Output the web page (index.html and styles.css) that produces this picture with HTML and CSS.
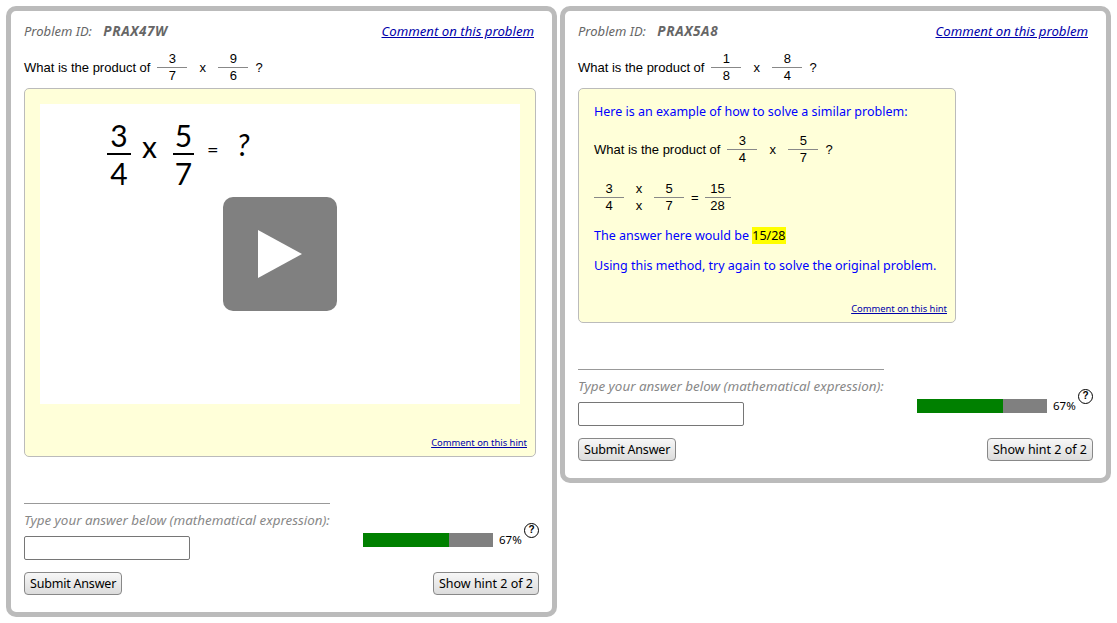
FILE: index.html
```html
<!DOCTYPE html>
<html>
    <head>
        <meta charset="utf-8">
        <title>Problem set</title>
        <link rel="stylesheet" href="styles.css">
    </head>
    <body>
        <div class="panel">
            <div class="panel-head">
                <div class="problem-id">Problem ID: <b>PRAX47W</b></div>
                <a class="comment" href="#">Comment on this problem</a>
            </div>
            <div class="question">
                What is the product of
                <span class="frac"><span>3</span><span>7</span></span>
                <span class="op">x</span>
                <span class="frac"><span>9</span><span>6</span></span>
                <span class="end">?</span>
            </div>
            <div class="hint hint-video">
                <div class="video">
                    <div class="chalk">
                        <span class="chalk-frac chalk-a"><span>3</span><span>4</span></span>
                        <span class="chalk-x">x</span>
                        <span class="chalk-frac chalk-b"><span>5</span><span>7</span></span>
                        <span class="chalk-eq">=</span>
                        <span class="chalk-q">?</span>
                    </div>
                    <div class="play">
                        <svg width="44" height="48" viewBox="0 0 44 48"><path d="M0 0L44 24L0 48Z" fill="#fff"/></svg>
                    </div>
                </div>
                <a class="comment-hint" href="#">Comment on this hint</a>
            </div>
            <div class="answer">
                <div class="answer-left">
                    <div class="label">Type your answer below (mathematical expression):</div>
                    <input class="answer-box" type="text">
                </div>
                <div class="progress">
                    <div class="bar"><div class="bar-fill" style="width:66%"></div></div>
                    <span class="pct">67%</span>
                    <span class="help">?</span>
                </div>
            </div>
            <div class="buttons">
                <button class="btn btn-submit">Submit Answer</button>
                <button class="btn">Show hint 2 of 2</button>
            </div>
        </div>

        <div class="panel">
            <div class="panel-head">
                <div class="problem-id">Problem ID: <b>PRAX5A8</b></div>
                <a class="comment" href="#">Comment on this problem</a>
            </div>
            <div class="question">
                What is the product of
                <span class="frac"><span>1</span><span>8</span></span>
                <span class="op">x</span>
                <span class="frac"><span>8</span><span>4</span></span>
                <span class="end">?</span>
            </div>
            <div class="hint hint-text">
                <p class="hint-line">Here is an example of how to solve a similar problem:</p>
                <div class="question hint-question">
                    What is the product of
                    <span class="frac"><span>3</span><span>4</span></span>
                    <span class="op">x</span>
                    <span class="frac"><span>5</span><span>7</span></span>
                    <span class="end">?</span>
                </div>
                <div class="question worked">
                    <span class="frac first"><span>3</span><span>4</span></span>
                    <span class="frac ops"><span>x</span><span>x</span></span>
                    <span class="frac"><span>5</span><span>7</span></span>
                    <span class="eq">=</span>
                    <span class="frac small"><span>15</span><span>28</span></span>
                </div>
                <p class="hint-line">The answer here would be <mark>15/28</mark></p>
                <p class="hint-line">Using this method, try again to solve the original problem.</p>
                <a class="comment-hint" href="#">Comment on this hint</a>
            </div>
            <div class="answer">
                <div class="answer-left">
                    <div class="label">Type your answer below (mathematical expression):</div>
                    <input class="answer-box" type="text">
                </div>
                <div class="progress">
                    <div class="bar"><div class="bar-fill" style="width:66%"></div></div>
                    <span class="pct">67%</span>
                    <span class="help">?</span>
                </div>
            </div>
            <div class="buttons">
                <button class="btn btn-submit">Submit Answer</button>
                <button class="btn">Show hint 2 of 2</button>
            </div>
        </div>
    </body>
</html>
```
FILE: styles.css
```css
body {
    margin: 0;
    padding: 6px;
    display: flex;
    align-items: flex-start;
    gap: 3px;
    background: #fff;
    font-family: "Noto Sans", sans-serif;
    font-size: 12.5px;
    color: #000;
}

.panel {
    width: 551px;
    box-sizing: border-box;
    border: 5px solid #bbb;
    border-radius: 10px;
    padding: 11px 13px 17px;
}

.panel-head {
    display: flex;
    justify-content: space-between;
    height: 20px;
    line-height: 18px;
    padding-right: 5px;
}

.problem-id {
    color: #666;
    font-style: italic;
    font-size: 13px;
}
.problem-id b {
    margin-left: 8px;
    font-size: 13.5px;
    letter-spacing: 0.6px;
}

.comment {
    color: #00a;
    font-style: italic;
    font-size: 13.2px;
}

.question {
    display: flex;
    align-items: center;
    height: 36px;
    margin-top: 7px;
    font-family: "Liberation Sans", sans-serif;
    font-size: 13px;
}

.frac {
    display: inline-flex;
    flex-direction: column;
    width: 30px;
    margin-left: 7px;
    text-align: center;
    font-size: 13px;
    line-height: 16px;
}
.frac span:first-child {
    border-bottom: 1px solid #888;
}

.op {
    margin: 0 5px 0 12px;
    width: 7px;
}
.end {
    margin-left: 7px;
}

.hint {
    box-sizing: border-box;
    margin-top: 3px;
    border: 1px solid #bbb;
    border-radius: 5px;
    background: #ffffd9;
    position: relative;
}

.hint-video {
    width: 512px;
    height: 369px;
    padding: 15px;
}

.hint-text {
    width: 378px;
    height: 235px;
    padding: 13px 15px;
    color: #00f;
}

.video {
    width: 480px;
    height: 300px;
    background: #fff;
    display: flex;
    align-items: center;
    justify-content: center;
    position: relative;
}

.play {
    width: 114px;
    height: 114px;
    background: #808080;
    border-radius: 10px;
    display: flex;
    align-items: center;
    justify-content: center;
}

/* the sum written on the frame of the video */
.chalk {
    position: absolute;
    left: 0;
    top: 0;
    font-family: "Lato", sans-serif;
    font-size: 30px;
    line-height: 36px;
}
.chalk span {
    position: absolute;
}
.chalk-frac {
    top: 13px;
    display: flex;
    flex-direction: column;
    text-align: center;
}
.chalk-frac span {
    position: static;
}
.chalk-frac span:first-child {
    border-bottom: 2px solid #000;
}
.chalk-a { left: 67px; width: 24px; }
.chalk-b { left: 133px; width: 21px; }
.chalk-x { left: 102px; top: 24px; }
.chalk-eq { left: 167px; top: 27px; font-size: 20px; }
.chalk-q { left: 197px; top: 22px; font-style: italic; }

.comment-hint {
    position: absolute;
    right: 8px;
    bottom: 7px;
    font-size: 9.4px;
    color: #00a;
}

.hint-line {
    margin: 0;
    line-height: 20px;
}

.hint-question {
    margin-top: 9px;
    color: #000;
}
.worked {
    margin-top: 12px;
    color: #000;
}
.worked .first {
    margin-left: 0;
}
.worked .ops {
    width: 16px;
    margin-left: 7px;
}
.worked .ops + .frac {
    margin-left: 7px;
}
.worked .ops span:first-child {
    border-bottom: 1px solid transparent;
}
.eq {
    margin-left: 7px;
}
.worked .small {
    width: 26px;
    margin-left: 6px;
}
.worked + .hint-line {
    margin-top: 11px;
}
.hint-line + .hint-line {
    margin-top: 10px;
}
mark {
    background: #ff0;
    color: #000;
}

.answer {
    display: flex;
    justify-content: space-between;
    align-items: flex-end;
    margin-top: 46px;
}

.answer-left {
    width: 306px;
    border-top: 1px solid #999;
    padding-top: 7px;
}

.label {
    color: #888;
    font-style: italic;
    font-size: 13.4px;
    line-height: 18px;
    white-space: nowrap;
}

.answer-box {
    display: block;
    box-sizing: border-box;
    width: 166px;
    height: 24px;
    margin-top: 7px;
    border: 1px solid #767676;
    border-radius: 2px;
    padding: 0 4px;
    background: #fff;
}

.progress {
    display: flex;
    align-items: flex-start;
    margin-bottom: -1px;
    height: 38px;
    width: 176px;
}

.bar {
    flex: none;
    width: 130px;
    height: 14px;
    margin-top: 10px;
    background: #808080;
}
.bar-fill {
    height: 100%;
    background: #008000;
}

.pct {
    flex: none;
    width: 22px;
    margin: 9px 0 0 6px;
    font-size: 11.5px;
    line-height: 16px;
}

.help {
    flex: none;
    box-sizing: border-box;
    width: 15px;
    height: 15px;
    margin-left: 3px;
    border: 1.5px solid #000;
    border-radius: 50%;
    text-align: center;
    font-family: "Liberation Sans", sans-serif;
    font-weight: bold;
    font-size: 10px;
    line-height: 12px;
}

.buttons {
    display: flex;
    justify-content: space-between;
    margin-top: 12px;
}

.btn {
    height: 23px;
    padding: 0 5px;
    border: 1px solid #888;
    border-radius: 4px;
    background: linear-gradient(#f7f7f7, #dcdcdc);
    font-family: "Noto Sans", sans-serif;
    font-size: 12.5px;
    color: #000;
}
.btn-submit {
    letter-spacing: -0.2px;
}
```
